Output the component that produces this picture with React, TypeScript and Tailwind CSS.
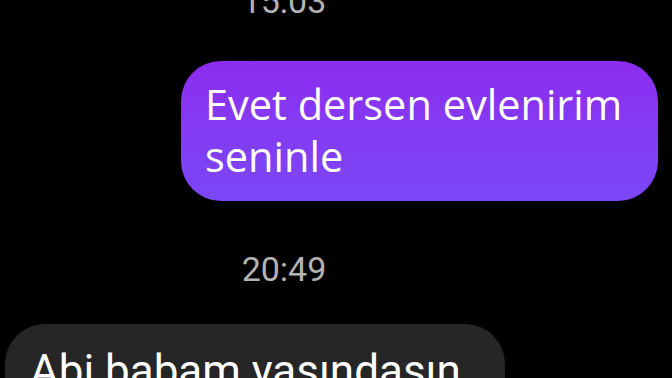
export default function App() {
  return (
    <div className="w-[672px] h-[378px] overflow-hidden bg-black font-['Roboto',sans-serif]">
      <div className="flex flex-col -mt-[14px]">
        {/* timestamp */}
        <div className="flex justify-center pr-[104px] text-[34px] leading-[30px] text-[#b3b3b3]">
          15:03
        </div>

        {/* outgoing */}
        <div className="flex justify-end pr-[14px] mt-[45px]">
          <div className="w-[477px] h-[140px] rounded-[40px] bg-gradient-to-b from-[#8c2cf0] to-[#7a47f6] pl-[24px] pt-[17px] text-white text-[41.5px] leading-[52px] font-['Open_Sans',sans-serif]">
            Evet dersen evlenirim seninle
          </div>
        </div>

        <div className="flex justify-center pr-[104px] mt-[48px] text-[34px] leading-[40px] text-[#b3b3b3]">
          20:49
        </div>

        {/* incoming */}
        <div className="flex justify-start pl-[5px] mt-[35px]">
          <div className="w-[500px] h-[120px] rounded-[40px] bg-[#262626] pl-[25px] pt-[22px] text-white text-[44px] leading-[50px]">
            Abi babam yaşındasın
          </div>
        </div>
      </div>
    </div>
  );
}
